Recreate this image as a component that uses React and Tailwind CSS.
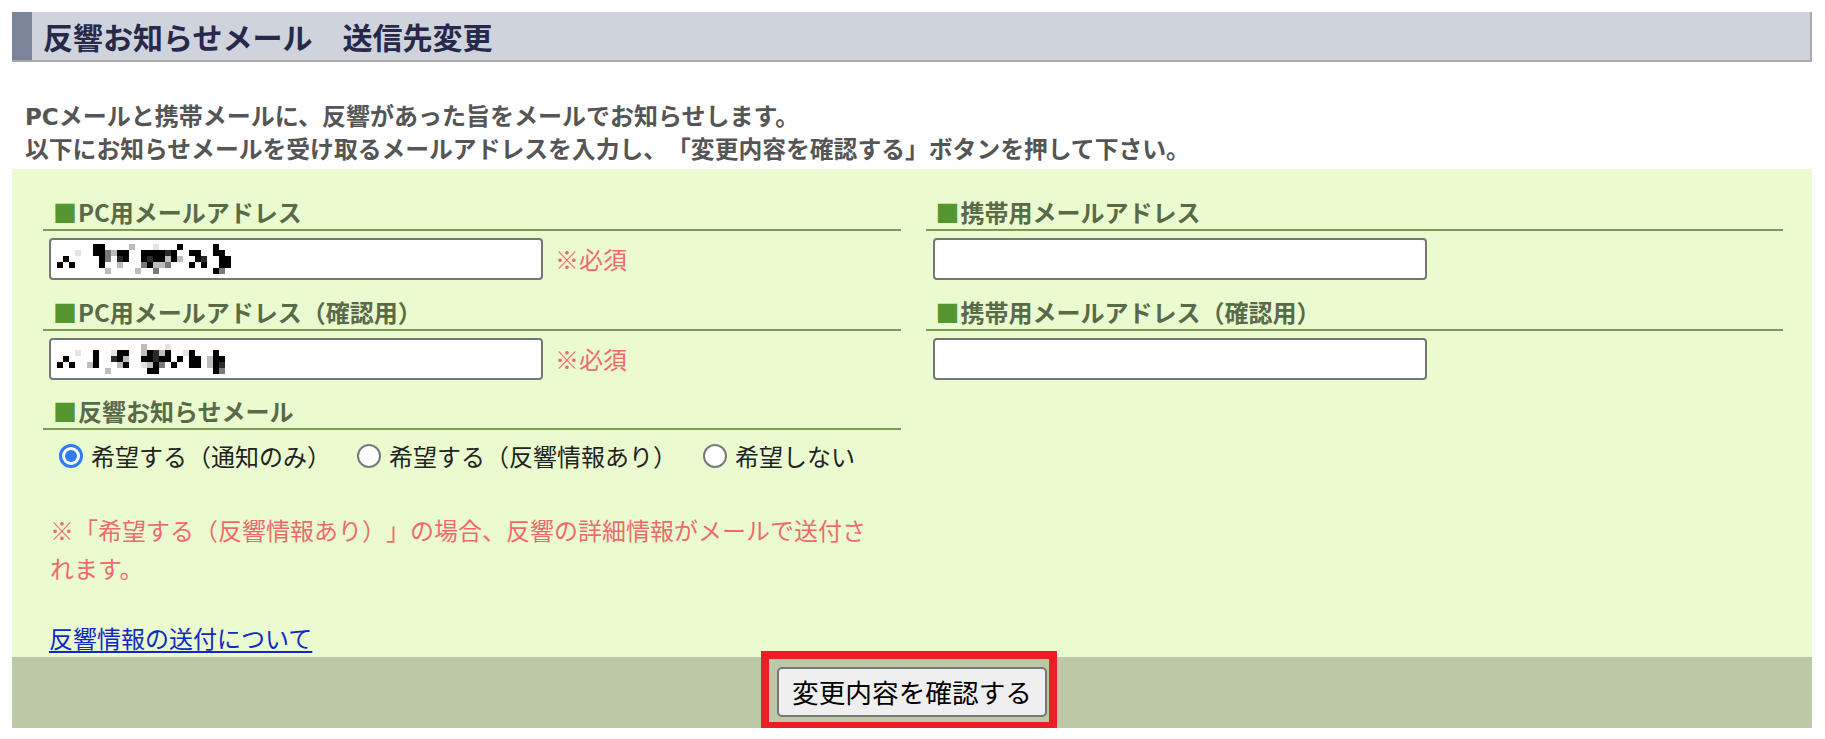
import React from "react";

const M1 = [
  "      ##    .   ,   #     #  ",
  "   ,  ##:.##  ####%#  ##  ## ",
  " #     #: %#  #%##.#.  #%  ##",
  "# #    #  .   :#..:   # #  ##",
  "        .    .  :         #: ",
];
const M2 = [
  "              .   ,          ",
  "   ,  #  ,##  .#%.#  ,#   #  ",
  " #    #  %#.  ##%## # ## .## ",
  "# #  .#   .#  ,.#: #  ## .#% ",
  "        .      ##         #: ",
];

function Mosaic({ rows }) {
  const colors = { "#": "#000", "%": "#2a2a2a", ":": "#7a7a7a", ".": "#bdbdbd", ",": "#e4e4e4" };
  const rects = [];
  rows.forEach((r, y) =>
    [...r].forEach((c, x) => {
      if (colors[c])
        rects.push(<rect key={`${x}-${y}`} x={x * 6} y={y * 6} width="6" height="6" fill={colors[c]} />);
    })
  );
  return (
    <svg width={rows[0].length * 6} height={rows.length * 6} viewBox={`0 0 ${rows[0].length * 6} ${rows.length * 6}`}>
      {rects}
    </svg>
  );
}

function Label({ children, className = "" }) {
  return (
    <div className={`flex items-center pl-[10px] h-[37px] border-b-2 border-[#7f9a55] text-[24px] font-bold leading-[35px] text-[#5a6a48] ${className}`}>
      <span className="text-[#55962e] mr-[1px]">■</span>
      <span>{children}</span>
    </div>
  );
}

function FakeInput({ rows }) {
  return (
    <div className="flex items-center w-[494px] h-[42px] rounded-[4px] border-2 border-[#767676] bg-white pl-[6px]">
      {rows && <Mosaic rows={rows} />}
    </div>
  );
}

function Radio({ checked, children, className = "" }) {
  return (
    <label className={`flex items-center ${className}`}>
      {checked ? (
        <span className="flex items-center justify-center w-[24px] h-[24px] rounded-full border-[3px] border-[#2f7bf6] bg-white">
          <span className="w-[12px] h-[12px] rounded-full bg-[#2f7bf6]" />
        </span>
      ) : (
        <span className="w-[24px] h-[24px] rounded-full border-2 border-[#7a7a7a] bg-white" />
      )}
      <span className="ml-[8px]">{children}</span>
    </label>
  );
}

export default function App() {
  return (
    <div className="pt-[12px] pl-[12px] pr-[13px] bg-white font-['Noto_Sans_CJK_JP','Noto_Sans',sans-serif] [text-spacing-trim:space-all]">
      {/* header */}
      <div className="flex h-[50px] bg-[#cfd3dc] border-b-2 border-r-2 border-[#a9a9a9]">
        <div className="w-[20px] bg-[#7b8499]" />
        <div className="flex items-center pl-[11px] text-[30px] font-bold text-[#27294a] leading-none">
          反響お知らせメール　送信先変更
        </div>
      </div>

      {/* intro */}
      <div className="mt-[36px] mb-[5px] pl-[13px] text-[24px] font-bold leading-[33px] text-[#555555]">
        <p className="h-[33px]">
          <span className="font-['DejaVu_Sans','Noto_Sans',sans-serif] text-[23px] leading-none">PC</span>
          メールと携帯メールに、反響があった旨をメールでお知らせします。
        </p>
        <p className="text-[23.8px]">以下にお知らせメールを受け取るメールアドレスを入力し、「変更内容を確認する」ボタンを押して下さい。</p>
      </div>

      {/* form */}
      <div className="bg-[#e9fbcf] pt-[25px] pb-[1px] pl-[31px] pr-[29px]">
        <div className="grid grid-cols-2 gap-x-[25px]">
          {/* left column */}
          <div>
            <Label>PC用メールアドレス</Label>
            <div className="mt-[7px] ml-[6px] flex items-center">
              <FakeInput rows={M1} />
              <span className="ml-[12px] text-[24px] leading-none text-[#ef6b6b]">※必須</span>
            </div>
            <Label className="mt-[14px]">PC用メールアドレス（確認用）</Label>
            <div className="mt-[7px] ml-[6px] flex items-center">
              <FakeInput rows={M2} />
              <span className="ml-[12px] text-[24px] leading-none text-[#ef6b6b]">※必須</span>
            </div>
            <Label className="mt-[13px]">反響お知らせメール</Label>
            <div className="mt-[8px] h-[36px] flex items-center text-[24px] text-[#222222]">
              <Radio checked className="ml-[16px]">希望する（通知のみ）</Radio>
              <Radio className="ml-[26px]">希望する（反響情報あり）</Radio>
              <Radio className="ml-[26px]">希望しない</Radio>
            </div>
            <p className="mt-[37px] ml-[7px] max-w-[828px] text-[24px] leading-[38px] text-[#ef6b6b]">
              ※「希望する（反響情報あり）」の場合、反響の詳細情報がメールで送付されます。
            </p>
            <div className="mt-[33px] ml-[6px] h-[36px] text-[24px] leading-[36px]">
              <a href="#" className="text-[#1029c6] underline underline-offset-[3px]">反響情報の送付について</a>
            </div>
          </div>

          {/* right column */}
          <div>
            <Label>携帯用メールアドレス</Label>
            <div className="mt-[7px] ml-[7px] flex items-center">
              <FakeInput />
            </div>
            <Label className="mt-[14px]">携帯用メールアドレス（確認用）</Label>
            <div className="mt-[7px] ml-[7px] flex items-center">
              <FakeInput />
            </div>
          </div>
        </div>
      </div>

      {/* footer */}
      <div className="bg-[#bbc9a6] pt-[10px] pb-[11px] flex justify-center">
        <div className="relative">
          <button className="h-[50px] px-[13px] rounded-[5px] border-2 border-[#767676] bg-[#efefef] text-[26.67px] leading-none text-black">
            変更内容を確認する
          </button>
          <div className="absolute -left-[16px] -right-[10px] -top-[16px] -bottom-[13px] border-[8px] border-[#ee1c25] pointer-events-none" />
        </div>
      </div>
    </div>
  );
}
